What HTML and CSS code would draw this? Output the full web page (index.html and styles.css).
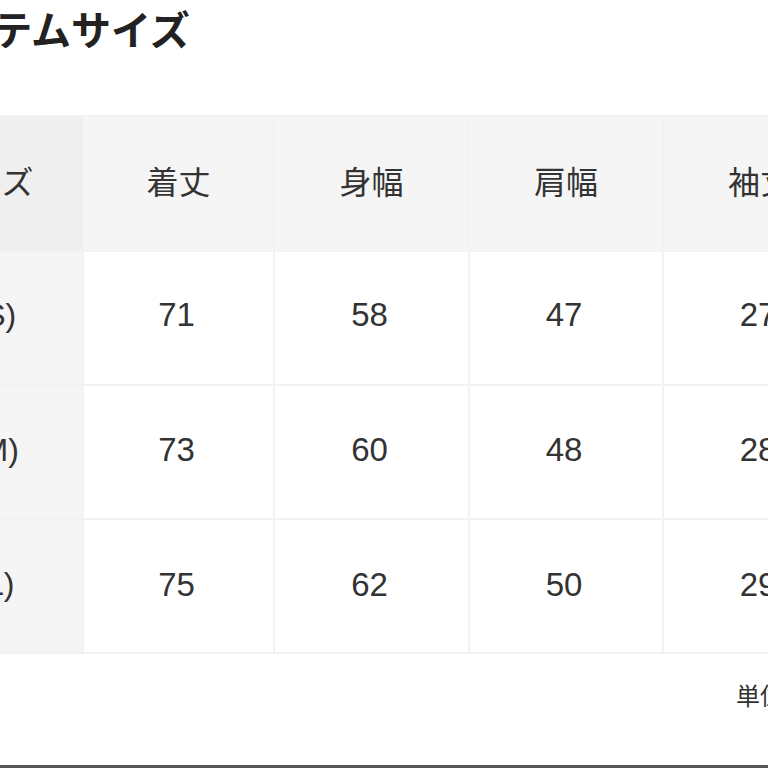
FILE: index.html
```html
<!DOCTYPE html>
<html lang="ja">
<head>
<meta charset="utf-8">
<title>アイテムサイズ</title>
<link rel="stylesheet" href="styles.css">
</head>
<body>
<div class="page">
  <h2 class="title">アイテムサイズ</h2>
  <table class="size-table">
    <thead>
      <tr>
        <th class="label c1">サイズ</th>
        <th class="c2">着丈</th>
        <th class="c3">身幅</th>
        <th class="c4">肩幅</th>
        <th class="c5">袖丈</th>
      </tr>
    </thead>
    <tbody>
      <tr class="r1">
        <th class="label">1(S)</th>
        <td>71</td><td>58</td><td>47</td><td>27</td>
      </tr>
      <tr class="r2">
        <th class="label">2(M)</th>
        <td>73</td><td>60</td><td>48</td><td>28</td>
      </tr>
      <tr class="r3">
        <th class="label">3(L)</th>
        <td>75</td><td>62</td><td>50</td><td>29</td>
      </tr>
    </tbody>
  </table>
  <p class="unit">単位：cm</p>
  <div class="rule"></div>
</div>
</body>
</html>
```
FILE: styles.css
```css
html, body {
  margin: 0;
  padding: 0;
  background: #ffffff;
  overflow: hidden;
  width: 768px;
  height: 768px;
}

body {
  font-family: "Liberation Sans", "Noto Sans CJK JP", sans-serif;
  color: #333333;
}

.page {
  margin-left: -112px;
  width: 1200px;
}

.title {
  margin: 4px 0 0 0;
  padding-left: 27px;
  font-family: "Noto Sans CJK JP", sans-serif;
  font-size: 40px;
  font-weight: 700;
  line-height: 48px;
  color: #222222;
}

.size-table {
  margin-top: 63px;
  border-collapse: separate;
  border-spacing: 2px;
  background: #f2f2f2;
  table-layout: fixed;
}

.size-table th,
.size-table td {
  padding: 0;
  text-align: center;
  vertical-align: middle;
  font-size: 32px;
  font-weight: 400;
  color: #333333;
}

.size-table tbody td {
  font-size: 33px;
  padding-right: 4px;
}

.size-table thead th {
  height: 125px;
  padding-bottom: 8px;
  background: #f5f5f5;
  font-family: "Noto Sans CJK JP", sans-serif;
}

.size-table thead th.label {
  background: #efefef;
}

.size-table tbody .r1 td,
.size-table tbody .r1 th {
  height: 126px;
  padding-bottom: 6px;
}

.size-table tbody .r2 td,
.size-table tbody .r2 th {
  height: 128px;
  padding-bottom: 4px;
}

.size-table tbody .r3 td,
.size-table tbody .r3 th {
  height: 129px;
  padding-bottom: 3px;
}

.size-table tbody td {
  background: #ffffff;
}

.size-table tbody th.label {
  background: #f5f5f5;
}

.c1 { width: 192px; }
.c2 { width: 189px; }
.c3 { width: 193px; }
.c4 { width: 192px; }
.c5 { width: 192px; }

.unit {
  margin: 24px 0 0 0;
  padding-left: 848px;
  font-family: "Noto Sans CJK JP", sans-serif;
  font-size: 24px;
  line-height: 34px;
  color: #333333;
  white-space: nowrap;
}

.rule {
  margin-top: 53px;
  height: 3px;
  background: #555555;
}
```
